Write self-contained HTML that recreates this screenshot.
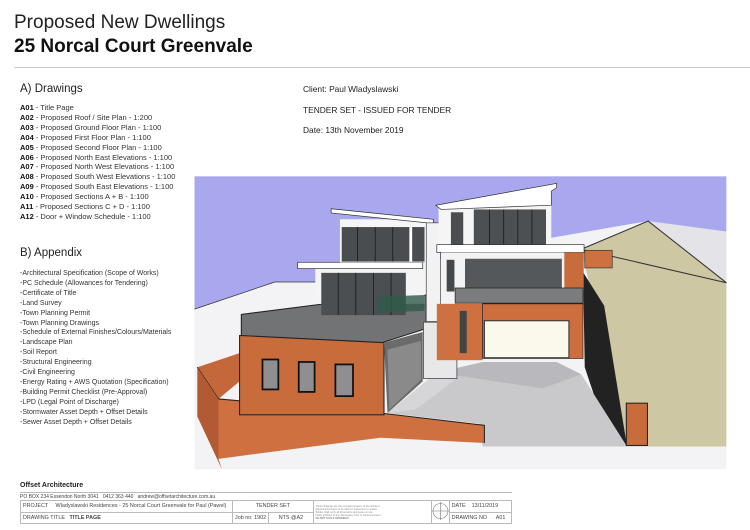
<!DOCTYPE html>
<html><head><meta charset="utf-8"><style>
*{margin:0;padding:0;box-sizing:border-box}
body{width:750px;height:530px;background:#fff;font-family:"Liberation Sans",Arial,sans-serif;color:#222;position:relative;overflow:hidden}
.a{position:absolute;white-space:nowrap}
.t1{left:14px;top:12px;font-size:19px;color:#222}
.t2{left:14px;top:36px;font-size:19px;font-weight:bold;color:#111}
.hr{position:absolute;left:14px;top:67px;width:736px;height:1px;background:#ccc}
.h{font-size:11.5px;color:#222}
.li{font-size:7.5px;line-height:9.9px;color:#333}
.li b{color:#111}
.c{font-size:8.4px;color:#222}
.ft{font-size:5px;color:#444}
table{position:absolute;left:20px;top:500px;width:492px;border-collapse:collapse;font-size:5.4px;color:#444}
td{border:1px solid #bbb;height:11px;padding:0 2px;white-space:nowrap}
</style></head><body>
<div class="a t1">Proposed New Dwellings</div>
<div class="a t2">25 Norcal Court Greenvale</div>
<div class="hr"></div>
<div class="a h" style="left:20px;top:83px">A) Drawings</div>
<div class="a li" style="left:20px;top:103px">
<b>A01</b> - Title Page<br><b>A02</b> - Proposed Roof / Site Plan - 1:200<br><b>A03</b> - Proposed Ground Floor Plan - 1:100<br><b>A04</b> - Proposed First Floor Plan - 1:100<br><b>A05</b> - Proposed Second Floor Plan - 1:100<br><b>A06</b> - Proposed North East Elevations - 1:100<br><b>A07</b> - Proposed North West Elevations - 1:100<br><b>A08</b> - Proposed South West Elevations - 1:100<br><b>A09</b> - Proposed South East Elevations - 1:100<br><b>A10</b> - Proposed Sections A + B - 1:100<br><b>A11</b> - Proposed Sections C + D - 1:100<br><b>A12</b> - Door + Window Schedule - 1:100</div>
<div class="a h" style="left:20px;top:247px">B) Appendix</div>
<div class="a li" style="left:20px;top:269px;font-size:7px">
-Architectural Specification (Scope of Works)<br>-PC Schedule (Allowances for Tendering)<br>-Certificate of Title<br>-Land Survey<br>-Town Planning Permit<br>-Town Planning Drawings<br>-Schedule of External Finishes/Colours/Materials<br>-Landscape Plan<br>-Soil Report<br>-Structural Engineering<br>-Civil Engineering<br>-Energy Rating + AWS Quotation (Specification)<br>-Building Permit Checklist (Pre-Approval)<br>-LPD (Legal Point of Discharge)<br>-Stormwater Asset Depth + Offset Details<br>-Sewer Asset Depth + Offset Details</div>
<div class="a c" style="left:303px;top:84px">Client: Paul Wladyslawski</div>
<div class="a c" style="left:303px;top:105px">TENDER SET - ISSUED FOR TENDER</div>
<div class="a c" style="left:303px;top:125px">Date: 13th November 2019</div>

<svg class="a" style="left:190px;top:170px" width="550" height="317" viewBox="0 0 1560 900">
<rect x="12" y="18" width="1510" height="520" fill="#a9a8ef"/>
<polygon points="12,395 240,318 380,318 1040,190 1300,145 1522,175 1522,850 12,850" fill="#f3f3f5"/>
<polyline points="12,395 240,318 380,318" fill="none" stroke="#333" stroke-width="2"/>
<polygon points="1110,225 1300,145 1522,320 1522,785 1240,785" fill="#cdc7a4"/>
<polygon points="1300,145 1522,320 1522,175" fill="#e4e4e8"/>
<polygon points="1110,225 1300,145 1522,320" fill="none" stroke="#333" stroke-width="3"/>
<polygon points="1115,290 1175,385 1240,785 1195,785 1120,560" fill="#222"/>
<polygon points="560,690 700,575 1110,580 1240,785 830,785 820,720" fill="#c9c9cc"/>
<polygon points="700,575 830,545 1040,545 1110,580 1000,620" fill="#b9b9bd"/>
<polygon points="560,690 700,575 760,590 640,680" fill="#d6d6d8"/>
<polygon points="20,560 140,520 140,600 80,650 80,820" fill="#c4683c"/>
<polygon points="80,650 540,690 835,725 835,775 540,760 80,820" fill="#cf7040"/>
<polyline points="20,560 80,650 540,690 835,725 835,775" fill="none" stroke="#222" stroke-width="3"/>
<polygon points="20,560 80,650 80,820 90,850 20,700" fill="#b25a33"/>
<rect x="140" y="470" width="410" height="225" fill="#c96c3c" stroke="#222" stroke-width="3"/>
<rect x="205" y="538" width="45" height="85" fill="#8f8f92" stroke="#111" stroke-width="5"/>
<rect x="308" y="545" width="45" height="85" fill="#8f8f92" stroke="#111" stroke-width="5"/>
<rect x="412" y="552" width="50" height="90" fill="#8f8f92" stroke="#111" stroke-width="5"/>
<polygon points="550,490 660,460 660,600 560,690" fill="#6b6b6b"/>
<polygon points="560,510 655,485 655,595 565,680" fill="#8a8a8a"/>
<polygon points="145,410 380,380 670,355 670,450 545,490 145,470" fill="#727374" stroke="#222" stroke-width="3"/>
<rect x="355" y="270" width="310" height="110" fill="#f4f4f4"/>
<rect x="372" y="292" width="240" height="120" fill="#4b4f52"/>
<g stroke="#111" stroke-width="2"><line x1="420" y1="292" x2="420" y2="412"/><line x1="470" y1="292" x2="470" y2="412"/><line x1="520" y1="292" x2="520" y2="412"/><line x1="570" y1="292" x2="570" y2="412"/></g>
<polygon points="530,360 665,355 665,400 530,405" fill="#2e5a48" opacity=".8"/>
<rect x="305" y="262" width="355" height="18" fill="#fff" stroke="#333" stroke-width="2"/>
<rect x="425" y="140" width="250" height="122" fill="#f6f6f6"/>
<rect x="430" y="162" width="235" height="98" fill="#4a4d50"/>
<g stroke="#111" stroke-width="2"><line x1="475" y1="162" x2="475" y2="260"/><line x1="525" y1="162" x2="525" y2="260"/><line x1="575" y1="162" x2="575" y2="260"/><line x1="625" y1="162" x2="625" y2="260"/></g>
<rect x="622" y="162" width="8" height="98" fill="#fff"/>
<polygon points="400,110 690,140 690,152 400,122" fill="#fff" stroke="#333" stroke-width="2"/>
<rect x="670" y="150" width="40" height="280" fill="#f2f2f2" stroke="#444" stroke-width="2"/>
<rect x="662" y="432" width="95" height="160" fill="#e8e8e8" stroke="#333" stroke-width="2"/>
<rect x="700" y="380" width="130" height="160" fill="#cf7040"/>
<rect x="765" y="400" width="20" height="120" fill="#444"/>
<rect x="705" y="100" width="320" height="115" fill="#f5f5f5"/>
<rect x="740" y="120" width="35" height="95" fill="#4b4e51"/>
<rect x="805" y="112" width="205" height="103" fill="#4d5053"/>
<g stroke="#111" stroke-width="2"><line x1="850" y1="112" x2="850" y2="215"/><line x1="890" y1="112" x2="890" y2="215"/><line x1="930" y1="112" x2="930" y2="215"/><line x1="970" y1="112" x2="970" y2="215"/></g>
<polygon points="697,100 1040,38 1040,50 1025,60 1025,100 712,112" fill="#fff" stroke="#333" stroke-width="2"/>
<rect x="700" y="212" width="418" height="22" fill="#fff" stroke="#333" stroke-width="2"/>
<rect x="712" y="234" width="350" height="110" fill="#f3f3f3"/>
<rect x="728" y="255" width="22" height="90" fill="#45484b"/>
<rect x="780" y="252" width="275" height="90" fill="#55585b"/>
<rect x="1062" y="234" width="55" height="110" fill="#c96c3c"/>
<rect x="1120" y="228" width="78" height="50" fill="#cf7040" stroke="#333" stroke-width="2"/>
<polygon points="752,335 1115,335 1115,378 752,378" fill="#7b7c7e" stroke="#222" stroke-width="2"/>
<rect x="830" y="380" width="285" height="155" fill="#cc6e3e" stroke="#222" stroke-width="2"/>
<rect x="835" y="428" width="240" height="105" fill="#fbf8ec" stroke="#333" stroke-width="3"/>
<rect x="1238" y="662" width="60" height="120" fill="#c96c3c" stroke="#222" stroke-width="3"/>
</svg>

<div class="a" style="left:20px;top:482px;font-size:7px;font-weight:bold;color:#222">Offset Architecture</div>
<div class="a" style="left:20px;top:492px;width:492px;height:1px;background:#bbb"></div>
<div class="a ft" style="left:20px;top:494px">PO BOX 234 Essendon North 3041 &nbsp; 0412 363 440 &nbsp; andrew@offsetarchitecture.com.au</div>
<table>
<tr><td style="width:212px">PROJECT &nbsp;&nbsp;&nbsp; Wladyslawski Residences - 25 Norcal Court Greenvale for Paul (Pawel)</td><td colspan="2" style="text-align:center;width:78px">TENDER SET</td><td rowspan="2" style="width:118px;font-size:2.5px;line-height:3px;color:#888">These drawings are the copyright property of the architect<br>Figured dimensions to be taken in preference to scaled<br>Builder shall verify all dimensions and levels on site<br>Notify architect of any discrepancy prior to commencement<br><b>DO NOT SCALE DRAWINGS</b></td><td rowspan="2" style="width:18px;padding:0"><svg width="17" height="20" viewBox="0 0 17 20"><circle cx="8.5" cy="10" r="7.5" fill="none" stroke="#777" stroke-width=".6"/><line x1="8.5" y1="1" x2="8.5" y2="19" stroke="#777" stroke-width=".6"/><line x1="0" y1="10" x2="17" y2="10" stroke="#777" stroke-width=".6"/></svg></td><td>DATE &nbsp;&nbsp; 13/11/2019</td></tr>
<tr><td>DRAWING TITLE &nbsp; <b>TITLE PAGE</b></td><td style="width:30px">Job no: 1902</td><td style="text-align:center">NTS @A2</td><td>DRAWING NO &nbsp;&nbsp;&nbsp;&nbsp; A01</td></tr>
</table>
</body></html>
